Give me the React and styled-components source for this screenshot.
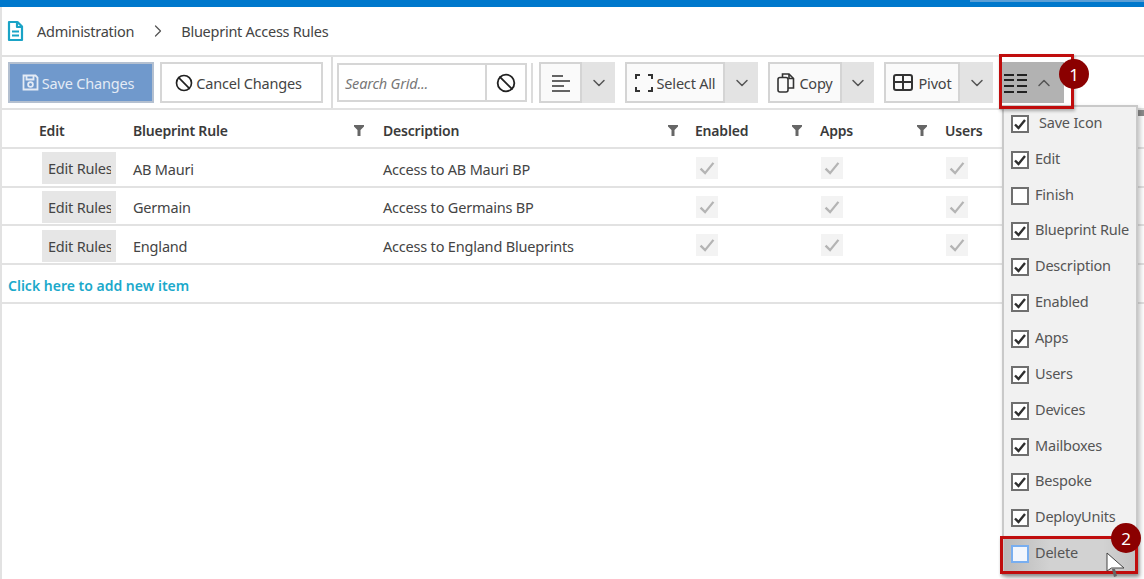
import React from 'react';
import styled, { createGlobalStyle } from 'styled-components';
import { Ban, ChevronDown, ChevronRight, ChevronUp } from 'lucide-react';

const GlobalStyle = createGlobalStyle`
  html, body {
    margin: 0;
    height: 579px;
    overflow: hidden;
    background: #fff;
  }
  * {
    box-sizing: border-box;
  }
`;

const Page = styled.div`
  position: relative;
  width: 1144px;
  height: 579px;
  overflow: hidden;
  font-family: "Noto Sans", "Open Sans", sans-serif;
  font-size: 14px;
  letter-spacing: -0.2px;
  color: #444;
`;

const TopBar = styled.div`
  height: 7px;
  background: #0078cc;
  display: flex;
  justify-content: flex-end;
`;

const TopStrip = styled.div`
  width: 174px;
  height: 2px;
  background: #5b9fd6;
`;

const Body = styled.div`
  border-left: 2px solid #e2e2e2;
  height: 572px;
`;

const Breadcrumb = styled.div`
  height: 50px;
  display: flex;
  align-items: center;
  padding-left: 4px;
  border-bottom: 2px solid #e0e0e0;
  font-size: 14.5px;
  letter-spacing: -0.26px;
`;

const CrumbText = styled.span`
  margin-left: ${(p) => p.$gap}px;
`;

const CrumbArrow = styled(ChevronRight)`
  margin-left: 14px;
  margin-right: -7px;
  color: #555;
`;

const Toolbar = styled.div`
  height: 53px;
  display: flex;
  align-items: center;
  padding-left: 6px;
  border-bottom: 2px solid #e2e2e2;
`;

const ActionButton = styled.div`
  width: ${(p) => p.$width}px;
  height: 41px;
  margin-right: ${(p) => p.$after || 0}px;
  padding-right: 6px;
  display: flex;
  align-items: center;
  justify-content: center;
  gap: 3px;
  font-size: 14.5px;
  background: ${(p) => (p.$primary ? '#7099cc' : '#fff')};
  color: ${(p) => (p.$primary ? '#e4ebf5' : '#444')};
  border: 2px solid ${(p) => (p.$primary ? '#b4c0d0' : '#d6d6d6')};
`;

const Separator = styled.div`
  width: 2px;
  height: ${(p) => p.$height}px;
  margin-right: ${(p) => p.$after}px;
  background: #dcdcdc;
`;

const SearchBox = styled.div`
  width: 150px;
  height: 39px;
  padding-left: 6px;
  display: flex;
  align-items: center;
  border: 2px solid #d6d6d6;
  font-style: italic;
  color: #777;
  font-size: 14.5px;
`;

const SearchClear = styled.div`
  width: 40px;
  height: 39px;
  margin-right: 4px;
  display: flex;
  align-items: center;
  justify-content: center;
  border: 2px solid #d6d6d6;
  border-left: none;
`;

const SplitGroup = styled.div`
  display: flex;
  height: 41px;
  margin-right: ${(p) => p.$after}px;
`;

const SplitMain = styled.div`
  width: ${(p) => p.$width}px;
  display: flex;
  align-items: center;
  justify-content: center;
  gap: ${(p) => p.$gap}px;
  background: #fafafa;
  border: 2px solid #d4d4d4;
  font-size: 14.5px;
`;

const SplitArrow = styled.div`
  width: ${(p) => p.$width}px;
  display: flex;
  align-items: center;
  justify-content: center;
  background: #e3e3e3;
  color: #555;
`;

const ColumnsButton = styled.div`
  width: 62px;
  height: 41px;
  display: flex;
  align-items: center;
  justify-content: space-between;
  padding: 0 10px 0 2px;
  background: #b2b2b2;
  color: #555;
`;

const GridRow = styled.div`
  display: grid;
  grid-template-columns: 123px 250px 312px 125px 125px 207px;
  height: ${(p) => p.$height}px;
  border-bottom: 2px solid #e2e2e2;
`;

const HeaderCell = styled.div`
  display: flex;
  align-items: center;
  justify-content: space-between;
  padding: 3px ${(p) => p.$right ?? 8}px 0 ${(p) => p.$left ?? 8}px;
  font-weight: 600;
  font-size: 14px;
  color: #3a3a3a;
`;

const HeaderNub = styled.div`
  width: 6px;
  height: 6px;
  margin-left: auto;
  align-self: flex-start;
  margin-top: -3px;
  background: #8c8c8c;
`;

const Cell = styled.div`
  display: flex;
  align-items: center;
  padding-left: ${(p) => p.$left ?? 8}px;
  padding-top: ${(p) => p.$top ?? 2}px;
  font-size: 14.5px;
`;

const EditRules = styled.div`
  width: 74px;
  height: 32px;
  padding-left: 6px;
  padding-right: 5px;
  display: flex;
  align-items: center;
  white-space: nowrap;
  overflow: hidden;
  background: #e6e6e6;
  font-size: 14.5px;
`;

const EditLabel = styled.span`
  display: block;
  overflow: hidden;
`;

const DisabledCheck = styled.div`
  width: 22px;
  height: 22px;
  display: flex;
  align-items: center;
  justify-content: center;
  background: #f3f3f3;
`;

const AddRow = styled.div`
  height: 39px;
  padding: 3px 0 0 6px;
  display: flex;
  align-items: center;
  border-bottom: 2px solid #e2e2e2;
  font-weight: 600;
  font-size: 14px;
  letter-spacing: 0;
  color: #1ba9cb;
`;

const ColumnMenu = styled.div`
  position: absolute;
  left: 1002px;
  top: 105px;
  width: 136px;
  height: 470px;
  background: #f1f1f1;
  border: 2px solid #c9c9c9;
  box-shadow: 2px 3px 5px rgba(0, 0, 0, 0.25);
`;

const MenuList = styled.div`
  margin-top: -1px;
`;

const MenuItem = styled.div`
  height: 35.85px;
  display: flex;
  align-items: center;
  padding-left: 7px;
  font-size: 14.5px;
  color: #555;
  background: ${(p) =>
    p.$hover ? 'linear-gradient(90deg, #b9b9b9 0%, #d2d2d2 35%, #d2d2d2 75%, #c2c2c2 100%)' : 'transparent'};
`;

const MenuLabel = styled.span`
  padding-bottom: 4px;
`;

const MenuBox = styled.div`
  width: 18px;
  height: 18px;
  flex: none;
  margin-right: ${(p) => p.$gap}px;
  display: flex;
  align-items: center;
  justify-content: center;
  background: ${(p) => (p.$hover ? '#f2f6fd' : '#fff')};
  border: 2px solid ${(p) => (p.$hover ? '#78aef0' : '#6f6f6f')};
`;

const RedFrame = styled.div`
  position: absolute;
  left: ${(p) => p.$x}px;
  top: ${(p) => p.$y}px;
  width: ${(p) => p.$w}px;
  height: ${(p) => p.$h}px;
  border: 3px solid #c00d0d;
  box-shadow: 1px 2px 3px rgba(0, 0, 0, 0.3);
`;

const Badge = styled.div`
  position: absolute;
  left: ${(p) => p.$x}px;
  top: ${(p) => p.$y}px;
  width: 30px;
  height: 30px;
  border-radius: 50%;
  display: flex;
  align-items: center;
  justify-content: center;
  background: #8b0000;
  color: #fff;
  font-size: 17px;
`;

const Cursor = styled.svg`
  position: absolute;
  left: 1106px;
  top: 552px;
`;

const DocIcon = () => (
  <svg width="18" height="22" viewBox="0 0 18 22" fill="none" stroke="#1aa3c6" strokeWidth="2.2" strokeLinejoin="round">
    <path d="M3 2h8.5L16 6.5V20H3z" />
    <path d="M11 2v5h5M6 11.5h7M6 15.5h7" />
  </svg>
);

const SaveIcon = () => (
  <svg width="17" height="17" viewBox="0 0 17 17" fill="none" stroke="#e4ebf5" strokeWidth="1.8">
    <path d="M1.5 1.5h12l2 2v12h-14z" />
    <path d="M4.5 1.5v4h7v-4" />
    <circle cx="8.5" cy="10.5" r="2.4" />
  </svg>
);

const AlignIcon = () => (
  <svg width="18" height="18" viewBox="0 0 18 18" stroke="#333" strokeWidth="1.6">
    <path d="M0 2h11M0 7h18M0 12h12M0 17h18" />
  </svg>
);

const SelectIcon = () => (
  <svg width="18" height="18" viewBox="0 0 18 18" fill="none" stroke="#333" strokeWidth="2">
    <path d="M1 5V1h4M13 1h4v4M1 13v4h4M13 17h4v-4" />
  </svg>
);

const CopyIcon = () => (
  <svg width="18" height="20" viewBox="0 0 18 20" fill="none" stroke="#333" strokeWidth="1.6">
    <path d="M5.5 4.5V1h6.5l4.5 4.5V15H11" />
    <path d="M12 1v4.5h4.5" />
    <rect x="1" y="4.5" width="10" height="14.5" rx="2" />
  </svg>
);

const PivotIcon = () => (
  <svg width="20" height="17" viewBox="0 0 20 17" fill="none" stroke="#333" strokeWidth="2">
    <rect x="1" y="1" width="18" height="15" rx="2" />
    <path d="M1 8h18M10 1v15" />
  </svg>
);

const ColumnsIcon = () => (
  <svg width="24" height="20" viewBox="0 0 24 20" stroke="#222" strokeWidth="2">
    <path d="M0 2h10M13 2h10M0 7h10M13 7h10M0 13h10M13 13h10M0 19h10M13 19h10" />
  </svg>
);

const FunnelIcon = () => (
  <svg width="10" height="11" viewBox="0 0 10 11" fill="#666">
    <path d="M0 0h10v1.5L6.5 5v6h-3V5L0 1.5z" />
  </svg>
);

const CheckMark = ({ color = '#2f2f2f', size = 14, width = 2.4 }) => (
  <svg width={size} height={size} viewBox="0 0 14 14" fill="none" stroke={color} strokeWidth={width}>
    <path d="M2 7.5l3.5 3.5L12 3" />
  </svg>
);

const rows = [
  { rule: 'AB Mauri', description: 'Access to AB Mauri BP', height: 39 },
  { rule: 'Germain', description: 'Access to Germains BP', height: 38 },
  { rule: 'England', description: 'Access to England Blueprints', height: 39 },
];

const menuItems = [
  { label: 'Save Icon', checked: true, gap: 10 },
  { label: 'Edit', checked: true },
  { label: 'Finish', checked: false },
  { label: 'Blueprint Rule', checked: true },
  { label: 'Description', checked: true },
  { label: 'Enabled', checked: true },
  { label: 'Apps', checked: true },
  { label: 'Users', checked: true },
  { label: 'Devices', checked: true },
  { label: 'Mailboxes', checked: true },
  { label: 'Bespoke', checked: true },
  { label: 'DeployUnits', checked: true },
  { label: 'Delete', checked: false, hover: true },
];

const splitButtons = [
  { icon: <AlignIcon />, width: 43, arrow: 33, after: 10, gap: 4 },
  { icon: <SelectIcon />, label: 'Select All', width: 100, arrow: 33, after: 10, gap: 4 },
  { icon: <CopyIcon />, label: 'Copy', width: 74, arrow: 32, after: 10, gap: 4 },
  { icon: <PivotIcon />, label: 'Pivot', width: 76, arrow: 33, after: 9, gap: 6 },
];

export default function App() {
  return (
    <Page>
      <GlobalStyle />
      <TopBar>
        <TopStrip />
      </TopBar>
      <Body>
        <Breadcrumb>
          <DocIcon />
          <CrumbText $gap={13}>Administration</CrumbText>
          <CrumbArrow size={20} strokeWidth={1.5} />
          <CrumbText $gap={20}>Blueprint Access Rules</CrumbText>
        </Breadcrumb>
        <Toolbar>
          <ActionButton $primary $width={146} $after={6}>
            <SaveIcon />
            Save Changes
          </ActionButton>
          <ActionButton $width={163} $after={8}>
            <Ban size={18} strokeWidth={2.2} color="#222" />
            Cancel Changes
          </ActionButton>
          <Separator $height={51} $after={4} />
          <SearchBox>Search Grid...</SearchBox>
          <SearchClear>
            <Ban size={20} strokeWidth={2.2} color="#222" />
          </SearchClear>
          <Separator $height={40} $after={6} />
          {splitButtons.map((button, i) => (
            <SplitGroup key={i} $after={button.after}>
              <SplitMain $width={button.width} $gap={button.gap}>
                {button.icon}
                {button.label}
              </SplitMain>
              <SplitArrow $width={button.arrow}>
                <ChevronDown size={20} strokeWidth={1.8} />
              </SplitArrow>
            </SplitGroup>
          ))}
          <ColumnsButton>
            <ColumnsIcon />
            <ChevronUp size={20} strokeWidth={1.8} />
          </ColumnsButton>
        </Toolbar>
        <GridRow $height={39}>
          <HeaderCell $left={37} $right={0}>Edit</HeaderCell>
          <HeaderCell $right={11}>
            Blueprint Rule
            <FunnelIcon />
          </HeaderCell>
          <HeaderCell $right={9}>
            Description
            <FunnelIcon />
          </HeaderCell>
          <HeaderCell $right={10}>
            Enabled
            <FunnelIcon />
          </HeaderCell>
          <HeaderCell $right={10}>
            Apps
            <FunnelIcon />
          </HeaderCell>
          <HeaderCell $right={0}>
            Users
            <HeaderNub />
          </HeaderCell>
        </GridRow>
        {rows.map((row) => (
          <GridRow key={row.rule} $height={row.height}>
            <Cell $left={40} $top={row.height === 39 && row.rule === 'AB Mauri' ? 0 : 2}>
              <EditRules>
                <EditLabel>Edit Rules</EditLabel>
              </EditRules>
            </Cell>
            <Cell>{row.rule}</Cell>
            <Cell>{row.description}</Cell>
            {[0, 1, 2].map((i) => (
              <Cell key={i} $left={9} $top={row.rule === 'AB Mauri' ? 0 : 1}>
                <DisabledCheck>
                  <CheckMark color="#b4b4b4" size={18} width={1.8} />
                </DisabledCheck>
              </Cell>
            ))}
          </GridRow>
        ))}
        <AddRow>Click here to add new item</AddRow>
      </Body>
      <ColumnMenu>
        <MenuList>
          {menuItems.map((item) => (
            <MenuItem key={item.label} $hover={item.hover}>
              <MenuBox $hover={item.hover} $gap={item.gap ?? 6}>
                {item.checked && <CheckMark />}
              </MenuBox>
              <MenuLabel>{item.label}</MenuLabel>
            </MenuItem>
          ))}
        </MenuList>
      </ColumnMenu>
      <RedFrame $x={999} $y={54} $w={75} $h={55} />
      <RedFrame $x={1000} $y={536} $w={138} $h={38} />
      <Badge $x={1059} $y={59}>1</Badge>
      <Badge $x={1111} $y={523}>2</Badge>
      <Cursor width="20" height="27" viewBox="0 0 20 27">
        <path d="M6 17l2 8 3-1-2-7z" fill="#666" />
        <path d="M1 1v18l4.5-3h12.5z" fill="#fff" stroke="#444" strokeWidth="1" />
      </Cursor>
    </Page>
  );
}
